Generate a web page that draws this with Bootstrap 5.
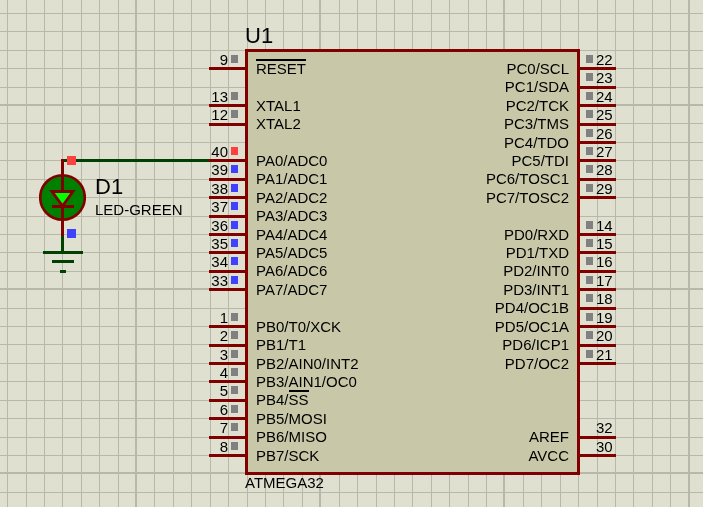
<!DOCTYPE html>
<html lang="en">
<head>
<meta charset="utf-8">
<meta name="viewport" content="width=device-width, initial-scale=1">
<title>ATMEGA32 schematic</title>
<link href="https://cdn.jsdelivr.net/npm/bootstrap@5.3.0/dist/css/bootstrap.min.css" rel="stylesheet">
<style>
  :root { --pin: #800000; --wire: #004000; --paper: #e0e0d0; --grid-line: #b8b8a8; --package: #c8c8a8; }
  body { background: var(--paper); color: #000; font: 15px/16px "Liberation Sans", Arial, sans-serif; }
  .sheet { padding: 23px 87px 0 39px; }
  .sheet-grid { z-index: -1; fill: var(--grid-line); }
  .part-ref { font-size: 22px; line-height: 25px; font-weight: 400; margin: 0; }
  .led-net { padding-top: 133px; }
  .net-wire { margin-top: 3px; padding: 12px 0 0 9px; border-top: 3px solid var(--wire); }
  .part-value { padding-top: 3px; white-space: nowrap; }
  .chip { width: 407px; }
  .chip-text { padding-left: 36px; }
  .chip .part-ref { padding-bottom: 1px; }
  .package { background: var(--package); border: 3px solid var(--pin); padding: 9px 8px 6px; }
  .pin-rows { display: grid; grid-template-rows: repeat(22, minmax(0, 1fr)); height: 405px; margin: 0; padding: 0; list-style: none; white-space: nowrap; }
  .pin-col { width: 36px; margin-top: 3px; }
  .pin-col li { display: flex; gap: 3px; border-bottom: 3px solid var(--pin); }
  .pin-col li:empty { border: 0; }
  .pins-left li { justify-content: flex-end; padding-right: 7px; }
  .pins-right li { padding-left: 6px; }
  .pins-right li::before, .pins-left li::after { content: ""; flex: none; width: 7px; height: 8px; margin-top: 3px; background: #808080; }
  .pin-col li:empty::before, .pin-col li:empty::after { display: none; }
  .pins-right li.power::before { background: transparent; }
  .pins-left li.high::after { background: #ff4040; }
  .pins-left li.low::after { background: #4040ff; }
  .active-low { display: inline-block; box-shadow: 0 -2px #000; }
</style>
</head>
<body>
<svg class="sheet-grid position-fixed top-0 start-0 w-100 h-100" id="sheetGrid" shape-rendering="crispEdges" aria-hidden="true"></svg>
<main class="sheet d-flex align-items-start min-vh-100">
  <section class="led-net d-flex flex-grow-1 align-items-start" aria-label="LED D1">
    <svg class="flex-shrink-0" width="47" height="117" viewBox="39 156 47 117" aria-hidden="true">
      <circle cx="62.500" cy="197.500" r="22.300" fill="#008000" stroke="#800000" stroke-width="2.600"/>
      <g shape-rendering="crispEdges">
        <path d="M64 159H86V162H64ZM61 236H64V251H61ZM43 251H83V254H43ZM52 260H74V263H52ZM60 270H66V273H60Z" fill="#004000"/>
        <path d="M61 159H64V191H61ZM61 206H64V236H61ZM52 205H74V208H52Z" fill="#800000"/>
        <path d="M67 156H76V165H67Z" fill="#ff4040"/>
        <path d="M67 229H76V238H67Z" fill="#4040ff"/>
      </g>
      <path d="M52 191.500H73L62.500 206Z" fill="#00ff00" stroke="#800000" stroke-width="2.800"/>
    </svg>
    <div class="net-wire flex-grow-1">
      <h2 class="part-ref">D1</h2>
      <div class="part-value">LED-GREEN</div>
    </div>
  </section>
  <section class="chip flex-shrink-0" aria-label="Microcontroller U1">
    <h1 class="part-ref chip-text">U1</h1>
    <div class="d-flex">
      <ol class="pin-rows pin-col pins-left">
        <li>9</li><li></li><li>13</li><li>12</li><li></li>
        <li class="high">40</li><li class="low">39</li><li class="low">38</li><li class="low">37</li><li class="low">36</li><li class="low">35</li><li class="low">34</li><li class="low">33</li>
        <li></li><li>1</li><li>2</li><li>3</li><li>4</li><li>5</li><li>6</li><li>7</li><li>8</li>
      </ol>
      <div class="package d-flex flex-grow-1 justify-content-between">
        <ul class="pin-rows">
          <li><span class="active-low">RESET</span></li><li></li><li>XTAL1</li><li>XTAL2</li><li></li>
          <li>PA0/ADC0</li><li>PA1/ADC1</li><li>PA2/ADC2</li><li>PA3/ADC3</li><li>PA4/ADC4</li><li>PA5/ADC5</li><li>PA6/ADC6</li><li>PA7/ADC7</li>
          <li></li><li>PB0/T0/XCK</li><li>PB1/T1</li><li>PB2/AIN0/INT2</li><li>PB3/AIN1/OC0</li><li>PB4/<span class="active-low">SS</span></li><li>PB5/MOSI</li><li>PB6/MISO</li><li>PB7/SCK</li>
        </ul>
        <ul class="pin-rows text-end">
          <li>PC0/SCL</li><li>PC1/SDA</li><li>PC2/TCK</li><li>PC3/TMS</li><li>PC4/TDO</li><li>PC5/TDI</li><li>PC6/TOSC1</li><li>PC7/TOSC2</li>
          <li></li><li>PD0/RXD</li><li>PD1/TXD</li><li>PD2/INT0</li><li>PD3/INT1</li><li>PD4/OC1B</li><li>PD5/OC1A</li><li>PD6/ICP1</li><li>PD7/OC2</li>
          <li></li><li></li><li></li><li>AREF</li><li>AVCC</li>
        </ul>
      </div>
      <ol class="pin-rows pin-col pins-right">
        <li>22</li><li>23</li><li>24</li><li>25</li><li>26</li><li>27</li><li>28</li><li>29</li>
        <li></li><li>14</li><li>15</li><li>16</li><li>17</li><li>18</li><li>19</li><li>20</li><li>21</li>
        <li></li><li></li><li></li><li class="power">32</li><li class="power">30</li>
      </ol>
    </div>
    <div class="chip-text">ATMEGA32</div>
  </section>
</main>
<script src="https://cdn.jsdelivr.net/npm/bootstrap@5.3.0/dist/js/bootstrap.bundle.min.js"></script>
<script>
  // Sheet grid: every tenth line is heavier.
  const pitch = 18.42;
  function drawGrid() {
    const w = window.innerWidth, h = window.innerHeight;
    let d = '';
    for (let k = 0; 7.6 + k * pitch < w; k++) {
      const x = Math.floor(7.6 + k * pitch), major = k % 10 === 7;
      d += `M${major ? x - 1 : x} 0h${major ? 2 : 1}v${h}h-${major ? 2 : 1}z`;
    }
    for (let k = 0; 13.4 + k * pitch < h; k++) {
      const y = Math.floor(13.4 + k * pitch), major = k % 10 === 5;
      d += `M0 ${major ? y - 1 : y}h${w}v${major ? 2 : 1}h-${w}z`;
    }
    document.getElementById('sheetGrid').innerHTML = `<path d="${d}"/>`;
  }
  drawGrid();
  window.addEventListener('resize', drawGrid);
</script>
</body>
</html>
